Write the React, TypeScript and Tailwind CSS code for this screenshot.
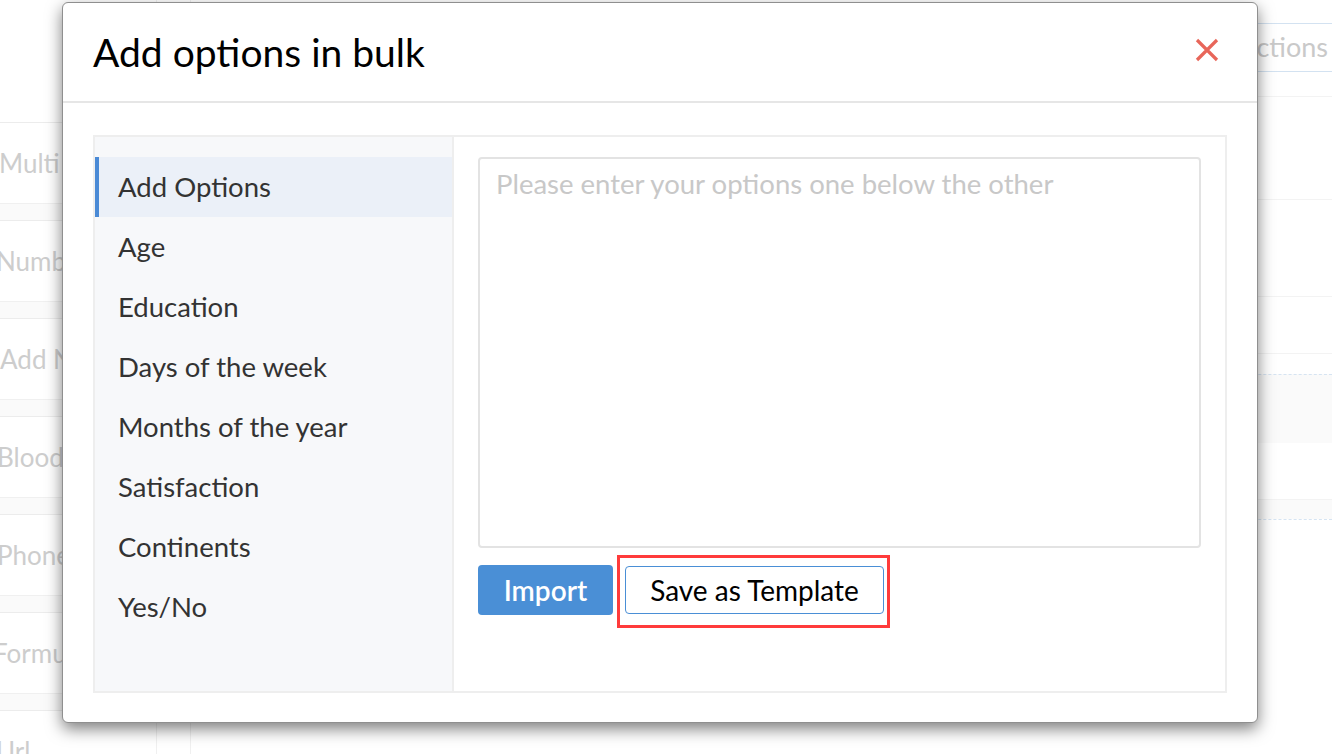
import React from 'react';

const bgRows = [
  { label: 'Multi Line', ml: '-ml-[1px]' },
  { label: 'Number', ml: '-ml-[4px]' },
  { label: 'Add Notes', ml: 'ml-0' },
  { label: 'Blood Group', ml: '-ml-[3px]' },
  { label: 'Phone', ml: '-ml-[3px]' },
  { label: 'Formula', ml: '-ml-[7px]' },
  { label: 'Url', ml: '-ml-[4px]' },
];

const templates = [
  'Add Options',
  'Age',
  'Education',
  'Days of the week',
  'Months of the year',
  'Satisfaction',
  'Continents',
  'Yes/No',
];

const Background: React.FC = () => (
  <div className="flex h-full w-full">
    <div className="w-[157px] shrink-0 pt-[122px] border-r border-[#f0f0f0]">
      {bgRows.map((r) => (
        <div key={r.label}>
          <div className="h-[81px] border-t border-[#ececec] flex items-center overflow-hidden">
            <span className={`${r.ml} whitespace-nowrap text-[26px] text-[#cdcdcd]`}>{r.label}</span>
          </div>
          <div className="h-[17px] border-t border-[#f0f0f0] bg-[#fafafa]" />
        </div>
      ))}
    </div>
    <div className="w-[34px] shrink-0 border-r border-[#f0f0f0]" />
    <div className="flex-1" />
    <div className="w-[200px] shrink-0 pt-[23px]">
      <div className="h-[49px] border-y border-[#d3e2f1] flex items-center justify-end pr-[4px]">
        <span className="text-[27px] text-[#c9c9c9]">Actions</span>
      </div>
      <div className="h-[25px] border-b border-[#f3f3f3]" />
      <div className="h-[103px] border-b border-[#f3f3f3]" />
      <div className="h-[97px] border-b border-[#f3f3f3]" />
      <div className="h-[57px] border-b border-[#f3f3f3]" />
      <div className="h-[20px]" />
      <div className="h-[69px] border-t border-dashed border-[#d6e4f2] bg-[#fafafa]" />
      <div className="h-[57px] border-b border-[#f3f3f3]" />
      <div className="h-[19px] bg-[#fafafa]" />
      <div className="border-t border-dashed border-[#d6e4f2]" />
    </div>
  </div>
);

const App: React.FC = () => {
  return (
    <div
      className="relative h-[754px] w-[1332px] overflow-hidden bg-white"
      style={{ fontFamily: 'Lato, "Liberation Sans", sans-serif' }}
    >
      <Background />

      <div className="absolute left-[62px] top-[2px] flex h-[721px] w-[1196px] flex-col rounded-[6px] border border-[#8f8f8f] bg-white shadow-[0_6px_16px_rgba(0,0,0,0.5)]">
        <div className="flex h-[100px] shrink-0 items-center justify-between border-b-2 border-[#e6e6e6] pl-[30px] pr-[38px]">
          <h2 className="text-[39px] leading-none text-black">Add options in bulk</h2>
          <button aria-label="Close" className="mt-[-4px]">
            <svg width="24" height="24" viewBox="0 0 24 24">
              <path d="M2 2 L22 22 M22 2 L2 22" stroke="#e8665a" strokeWidth="3.2" strokeLinecap="butt" />
            </svg>
          </button>
        </div>

        <div className="flex-1 px-[30px] pt-[32px] pb-[29px]">
          <div className="flex h-full border-2 border-[#eeeeee]">
            <div className="w-[359px] shrink-0 border-r-2 border-[#eeeeee] bg-[#f7f8fa] pt-[20px]">
              {templates.map((t, i) => (
                <div
                  key={t}
                  className={
                    i === 0
                      ? 'flex h-[60px] items-center border-l-4 border-[#4a8ad6] bg-[#ebf0f8] pl-[19px] text-[27.5px] text-[#333333]'
                      : 'flex h-[60px] items-center pl-[23px] text-[27.5px] text-[#333333]'
                  }
                >
                  {t}
                </div>
              ))}
            </div>

            <div className="flex flex-1 flex-col px-[24px] pt-[20px]">
              <textarea
                className="h-[391px] w-[723px] resize-none rounded-[4px] border-2 border-[#e3e3e3] px-[16px] pt-[4px] text-[27.5px] text-[#333] outline-none placeholder:text-[#c8c8c8]"
                placeholder="Please enter your options one below the other"
              />
              <div className="mt-[17px] flex items-center gap-[12px]">
                <button className="h-[50px] w-[135px] rounded-[4px] bg-[#4a8fd6] text-[28px] font-semibold text-white">
                  Import
                </button>
                <button className="relative h-[48px] w-[259px] rounded-[4px] border border-[#4a8fd6] bg-white text-[28px] text-black">
                  Save as Template
                  <span className="pointer-events-none absolute left-[-9px] top-[-12px] h-[73px] w-[273px] border-[3px] border-[#ff3b3b]" />
                </button>
              </div>
            </div>
          </div>
        </div>
      </div>
    </div>
  );
};

export default App;
